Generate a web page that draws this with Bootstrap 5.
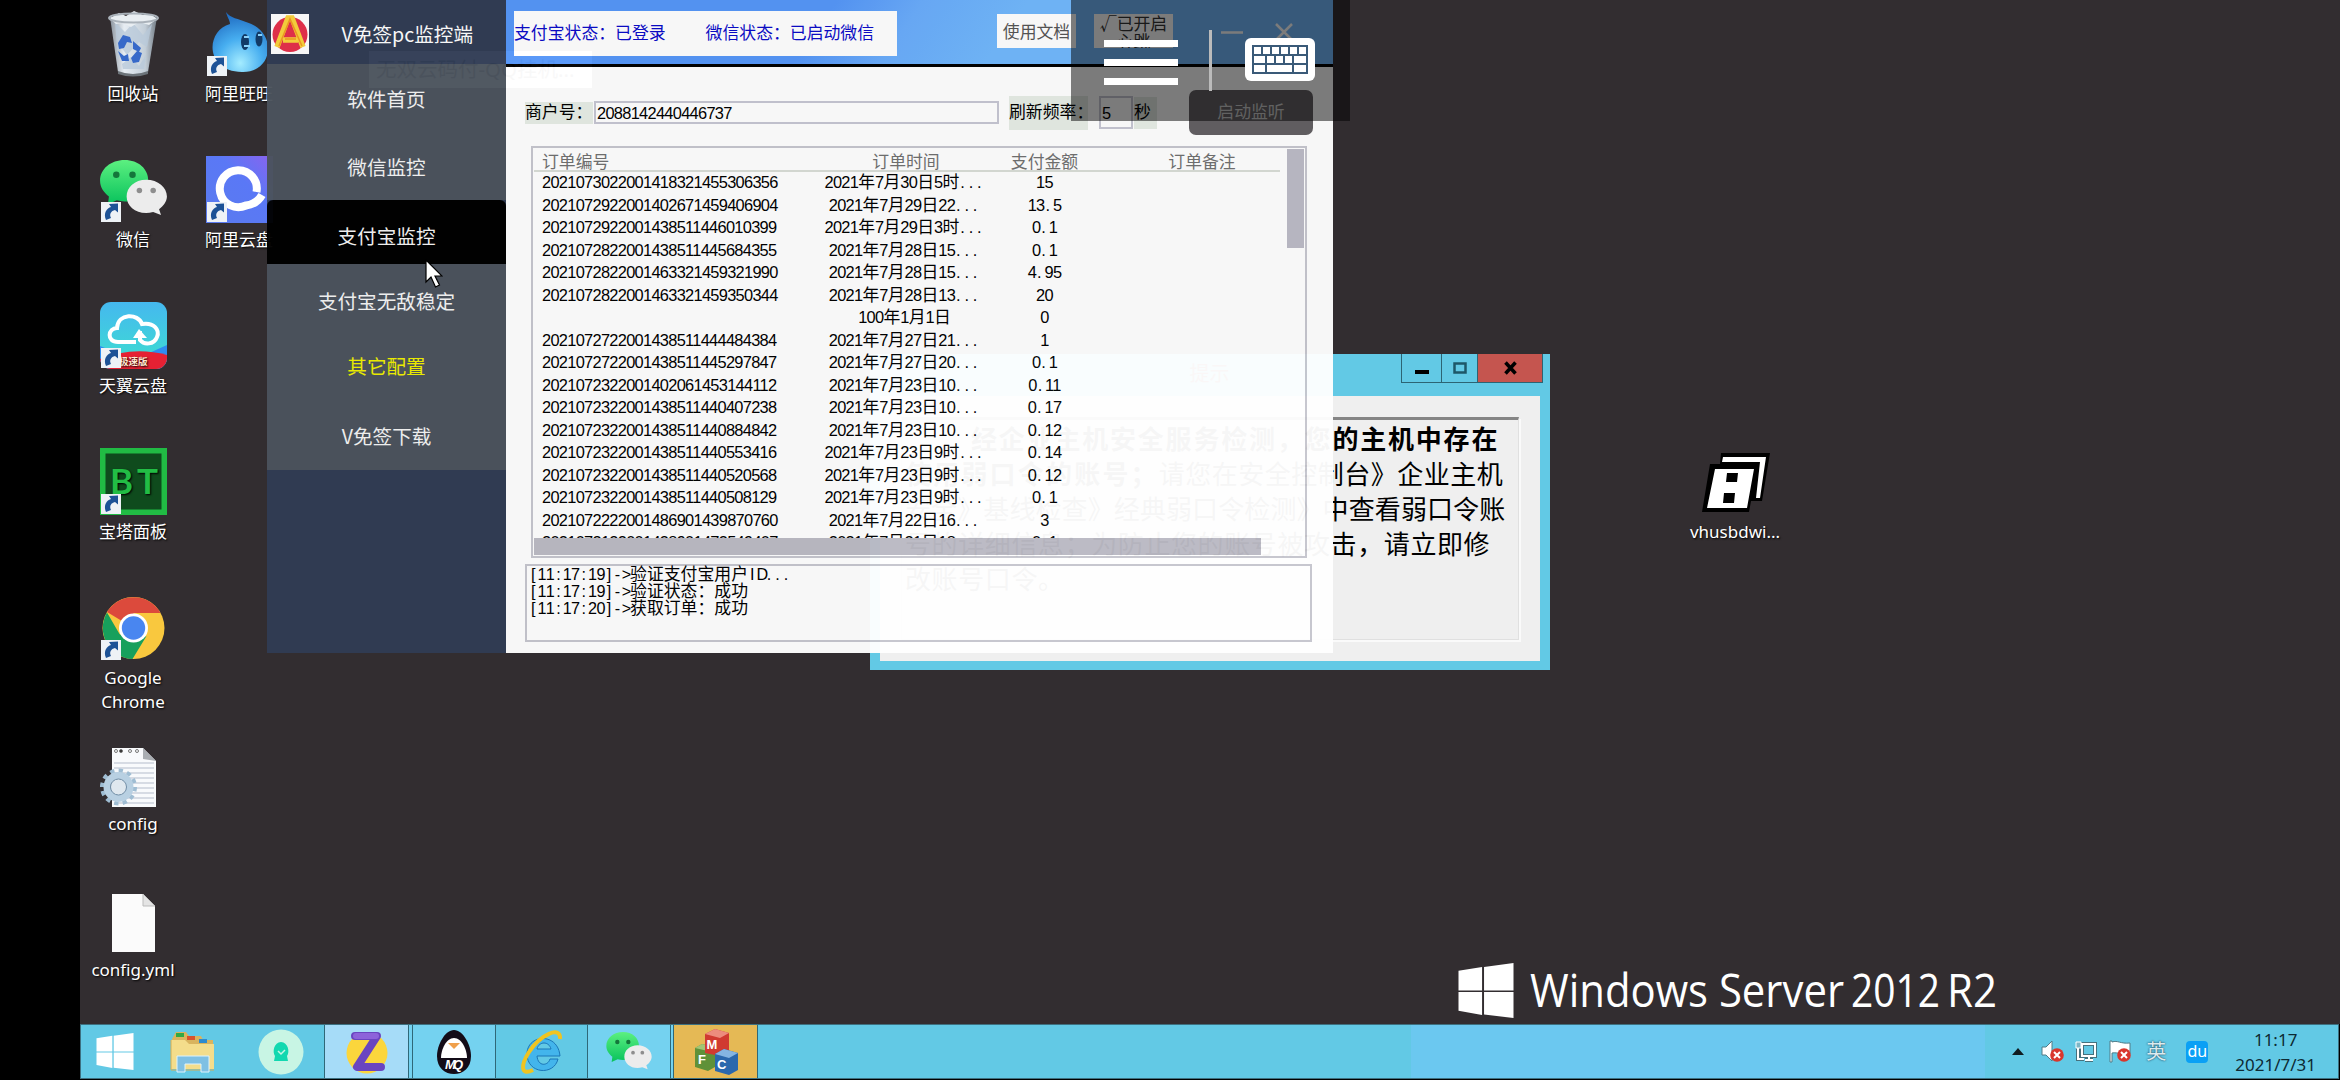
<!DOCTYPE html>
<html lang="zh-CN">
<head>
<meta charset="utf-8">
<title>Windows Server 2012 R2</title>
<link href="https://cdn.jsdelivr.net/npm/bootstrap@5.3.0/dist/css/bootstrap.min.css" rel="stylesheet">
<style>
body{width:2340px;height:1080px;overflow:hidden;background:#000;font:17px/24px "Noto Sans","Noto Sans CJK SC",sans-serif;color:#000}
.edge{width:80px;flex:none}
.desk{background:#322d30;width:2260px;height:1024px}
.icons{position:absolute;left:83px;top:10px;width:100px}
.icons.second{left:189px}
.icons.far{left:1685px;top:448px}
.ico{height:146px;color:#fff;text-align:center;text-shadow:1px 1px 2px #000;white-space:nowrap}
.ico svg{display:block;width:67px;height:67px;margin:0 auto 5px;overflow:visible}
.brand{position:absolute;left:1457px;top:958px}
.tip{position:absolute;left:369px;top:51px;width:223px;height:37px;background:#fff;color:#444;font-size:20.5px;line-height:37px;padding-left:7px;white-space:nowrap}
/* alert dialog */
.dlg{position:absolute;left:870px;top:354px;width:680px;height:316px;background:#62c9e5;padding:0 10px 9px}
.dlg-head{height:42px}
.dlg-title{flex:1;text-align:center;padding-left:138px;font-size:20px;line-height:40px;color:#7a2020}
.dlg-btns{height:29px;border:1px solid #2c6474;border-top:0;margin-right:-3px}
.dlg-btns span{display:flex;align-items:center;justify-content:center;border-right:1px solid #2c6474}
.dlg-btns span:last-child{border:0}
.dlg-body{background:#efefef;height:265px;padding:21px}
.msg{height:223px;border:1px solid #e0e0e0;border-top:3px solid #858585;box-shadow:2px 2px 0 #fafafa;font:26px/35px "Noto Sans CJK SC",sans-serif;padding:0 3px;white-space:nowrap}
/* main window */
.win{position:absolute;left:267px;top:0;width:1066px;height:653px;opacity:.965;background:#fff}
.side{width:239px;background:#303c54;flex:none;color:#fff;font:19.6px/26px "Noto Sans CJK SC",sans-serif;text-align:center}
.side-top{height:64px;padding:3px 33px 0 4px}
.side a{display:flex;align-items:center;justify-content:center;background:#4b535d;color:#f4f4f4;text-decoration:none}
.side a.on{background:#000;border-radius:6px 6px 0 0;height:64px;padding-top:7px}
.bar{height:67px;border-bottom:3px solid #000;background:linear-gradient(125deg,#5596f8 0 38%,#69acfb 48%,#71b7fc 60%);padding-left:8px}
.song{font-family:"Liberation Sans","Noto Sans CJK SC",sans-serif;font-size:16.85px;line-height:22px;white-space:nowrap}
.status{width:383px;height:45px;margin-top:11px;background:#fff;color:#0a0ac8;line-height:46px}
.mini{width:79px;height:34px;margin-top:14px;background:#fff;color:#555;text-align:center;overflow:hidden;line-height:34px;font-family:"Noto Sans CJK SC",sans-serif}
.mini.two{line-height:18px;white-space:normal;color:#333}
.panel{padding:23px 0 0 19px;width:827px}
.frm{height:45px}
.tag{background:#e6ece5}
.field{border:2px solid #c6c6d2;background:#fff;padding-left:1px}
.go{width:124px;height:45px;background:#625f62;color:#c8c8c8;border-radius:7px;text-align:center;line-height:46px}
.orders{margin:11px 0 0 6px;width:776px;height:412px;border:2px solid #c6c6ce;padding:1px}
.clipbox{height:389px;overflow:hidden;width:746px}
.grid-row{display:grid;grid-template-columns:289px 163px 117px 177px;text-align:center;height:22.5px;line-height:22.5px}
.grid-row>:first-child{text-align:left;padding-left:8px}
.grid-row>:last-child{padding-left:21px}
.grid-row.hd{height:23px;line-height:23px;border-bottom:2px solid #d8ddd6;color:#707070;font-family:"Noto Sans CJK SC",sans-serif}
#rows{margin-top:-.7px}
.n{font-size:16.4px;letter-spacing:-.7px}
.dt{letter-spacing:3.83px;padding-left:1px;margin-right:-1px}
.vs{width:17px;height:99px;background:#bbbac6;margin-left:7px}
.hs{width:727px;height:17px;background:#bbbac4}
.log{margin:6px 0 0 0;width:787px;height:78px;border:2px solid #c6c6ce;padding:0 2px;line-height:17px}
.log b{font-weight:400;display:inline-block;width:8.43px;text-align:center;font-size:16.2px}
.veil{position:absolute;left:1071px;top:0;width:279px;height:121px;background:rgba(0,0,0,.5)}
.cursor{position:absolute;left:425px;top:259px}
/* taskbar */
.tasks{height:55px;width:2259px;margin-left:80px;border:1px solid #3d7080;background:linear-gradient(90deg,#62c9e5 1330px,#6bc8f0 1330px 1904px,#62c9e5 1904px)}
.tasks>div{height:53px;display:flex;align-items:center;justify-content:center}
.run{background:#74d2f0;border:1px solid #2f6878;border-width:0 1px}
.tray{color:#0d2a33}
</style>
<script src="https://cdn.jsdelivr.net/npm/bootstrap@5.3.0/dist/js/bootstrap.bundle.min.js"></script>
</head>
<body>
<svg width="0" height="0" class="position-absolute">
<defs>
<symbol id="lnk" viewBox="0 0 20 20"><rect width="20" height="20" fill="#eef2f6"/><path d="M5 18C2 11 6 6 10 5L8 2l9-.5v9L14 8c-4 1-6 4-4 8z" fill="#1d5296"/></symbol>
<symbol id="wx" viewBox="0 0 68 60"><linearGradient id="g1" x2="0" y2="1"><stop stop-color="#5cf080"/><stop offset="1" stop-color="#08c25c"/></linearGradient><path d="M25 0C11 0 0 9 0 21c0 7 4 12 9 16l-1 8 9-4c14 4 32-3 32-20C49 9 39 0 25 0z" fill="url(#g1)"/><circle cx="16.500" cy="15" r="3.300" fill="#14773b"/><circle cx="33" cy="15" r="3.300" fill="#14773b"/><path d="M47 20c-12 0-20 8-20 17 0 11 12 20 27 16l8 3-2-6c4-3 8-8 8-13 0-9-9-17-21-17z" fill="#ececec"/><circle cx="40" cy="31" r="2.800" fill="#8e8e8e"/><circle cx="54" cy="31" r="2.800" fill="#8e8e8e"/></symbol>
<symbol id="flag" viewBox="0 0 56 56"><path d="M0 8 24 4v24H0zM26 4 56 0v28H26zM0 29.500h24V53L0 48.500zM26 29.500h30V56l-30-3.500z" fill="#fff"/></symbol>
<symbol id="err" viewBox="0 0 14 14"><circle cx="7" cy="7" r="6.800" fill="#d9362c"/><path d="m4 4 6 6m0-6-6 6" stroke="#fff" stroke-width="2"/></symbol>
</defs>
</svg>

<div class="d-flex">
 <div class="edge"></div>
 <main class="desk"></main>
</div>

<div class="icons d-flex flex-column">
 <div class="ico"><svg viewBox="0 0 67 67"><linearGradient id="bn"><stop stop-color="#8b949e"/><stop offset=".3" stop-color="#e7edf3"/><stop offset=".75" stop-color="#c3ced8"/><stop offset="1" stop-color="#737c85"/></linearGradient><path d="M10 7 18 62q15 6 30 0L57 7z" fill="url(#bn)"/><path d="m15 12 10 10 8-9 10 12 9-11-5 23-8-5-12 13-6-8-3 13zm7 42 9-7 8 9 7-11-2 14H23z" fill="#b9c9da" opacity=".8"/><path d="M10 8 19 3l7 3 8-5 9 4 8-1 6 5-8 6-10-3-8 5-9-4-6 1z" fill="#e9eef2"/><ellipse cx="33.500" cy="8" rx="24.500" ry="4.500" fill="none" stroke="#aab2ba" stroke-width="2"/><path d="m18 33 5-8 7 2 2 6-5-1-3 6-5 1zm15-2 8 7-2 4-6-3zM18 41l6 5 4-2 1 7h-7zM31 48l6-7 5 2-3 9-6 1z" fill="#3769c9"/><path d="M18 61q15 6 30 0v3q-15 5-30 0z" fill="#6c7379"/></svg>回收站</div>
 <div class="ico"><svg viewBox="0 0 67 67"><use href="#wx" x="0" y="4" width="67" height="59"/><use href="#lnk" x="1" y="46" width="20" height="20"/></svg>微信</div>
 <div class="ico"><svg viewBox="0 0 67 67"><linearGradient id="ty" x2="0" y2="1"><stop stop-color="#45b8ef"/><stop offset="1" stop-color="#3de0cf"/></linearGradient><clipPath id="tyc"><rect width="67" height="67" rx="11"/></clipPath><g clip-path="url(#tyc)"><rect width="67" height="67" fill="url(#ty)"/><path d="m0 44 20 8h27l20-9v24H0z" fill="#2e8df0"/><path d="M0 57q33-13 67-4v14H0z" fill="#e62133"/></g><path d="M36 40H18C6 40 8 26 17 26c1-15 21-15 25-4 12-2 18 6 15 13-3 8-13 8-17 3V29" fill="none" stroke="#fff" stroke-width="4"/><path d="m33 36 6-9 8 9z" fill="#fff"/><text x="19" y="63" font-size="9.500" font-weight="700" fill="#ffe9d0" font-family="Noto Sans CJK SC">极速版</text><use href="#lnk" x="1" y="46" width="20" height="20"/></svg>天翼云盘</div>
 <div class="ico"><svg viewBox="0 0 67 67"><rect width="67" height="67" fill="#21bb44"/><rect x="5.500" y="5.500" width="56" height="56" fill="#0f4b1d"/><text x="10" y="46" font-family="Lato" font-size="35" font-weight="700" fill="#22bd45" textLength="48">BT</text><use href="#lnk" x="1" y="46" width="20" height="20"/></svg>宝塔面板</div>
 <div class="ico"><svg viewBox="0 0 67 67"><g transform="translate(2.500 3)"><circle cx="31" cy="31" r="31" fill="#f9c83e"/><path d="M31 31 4.500 15A31 31 0 0 1 58 16H31z" fill="#dc4a3c"/><path d="M4.500 15.500A31 31 0 0 0 30 62L44 39 31 45 17 37z" fill="#17a05c"/><circle cx="31" cy="31" r="14.500" fill="#fff"/><circle cx="31" cy="31" r="11.700" fill="#4986f0"/></g><use href="#lnk" x="1" y="46" width="20" height="20"/></svg>Google<br>Chrome</div>
 <div class="ico"><svg viewBox="0 0 67 67"><path d="M12 8h31l13 13v46H12z" fill="#f8fafc"/><path d="M43 8v11l13 2z" fill="#a9adb2"/><path d="M14 23h40M14 28h40M14 33h40M14 38h40M14 43h40M14 48h40M14 53h40M14 58h40M14 63h40" stroke="#b4bccb"/><g fill="none" stroke="#777"><circle cx="16" cy="11" r="1.500"/><circle cx="21" cy="11" r="1.500" fill="#222"/><circle cx="30" cy="11" r="1.500"/><circle cx="37" cy="11" r="1.500"/></g><circle cx="18.500" cy="47" r="16.500" fill="none" stroke="#9fbdd3" stroke-width="4" stroke-dasharray="4.300 4.300"/><circle cx="18.500" cy="47" r="11.500" fill="none" stroke="#b8d0e2" stroke-width="7"/><circle cx="18.500" cy="47" r="8" fill="#dfe8ef" stroke="#6f8da6"/></svg>config</div>
 <div class="ico"><svg viewBox="0 0 67 67"><path d="M12 8h31l12 12v46H12z" fill="#fbfbfb"/><path d="M43 8v12h12z" fill="#e4e4e4" stroke="#bbb"/></svg>config.yml</div>
</div>
<div class="icons second d-flex flex-column">
 <div class="ico"><svg viewBox="0 0 67 67"><radialGradient id="ww" cx=".5" cy=".85" r=".9"><stop stop-color="#a4ecff"/><stop offset=".45" stop-color="#47aef0"/><stop offset="1" stop-color="#1a62bb"/></radialGradient><path d="M20 2c4 6 13 7 20 10 32 9 28 51-4 50C-1 62-1 21 24 14c0-4-3-7-4-12z" fill="url(#ww)"/><ellipse cx="39" cy="32" rx="4" ry="8" fill="#123a66"/><ellipse cx="53" cy="29" rx="3.500" ry="7.500" fill="#123a66"/><path d="M38 27h5M52 25h4M38 36h6" stroke="#8ad1f8" stroke-width="2"/><use href="#lnk" x="1" y="46" width="20" height="20"/></svg>阿里旺旺</div>
 <div class="ico"><svg viewBox="0 0 67 67"><linearGradient id="yp" x1="1" x2="0" y2="1"><stop stop-color="#8a63ef"/><stop offset=".4" stop-color="#5a78f6"/><stop offset="1" stop-color="#5a7bee"/></linearGradient><rect width="67" height="67" fill="url(#yp)"/><path d="M50.500 36A18.500 18.500 0 1 0 40 49.500Q51 48 56 39" fill="none" stroke="#fff" stroke-width="8"/><use href="#lnk" x="1" y="46" width="20" height="20"/></svg>阿里云盘</div>
</div>
<div class="icons far"><div class="ico"><svg viewBox="0 0 67 67"><path d="M19 5h49l-8 48h-11L47 64H0L8 16h10z" fill="#000"/><path d="M21 9h43l-6 41h-4l4-36H20zM13 21h39l-7 39H5z" fill="#fff"/><path d="M25 25h11l-1 9H24zM22 45h11l-1 10H21z" fill="#000"/></svg>vhusbdwi...</div></div>

<svg class="brand" width="545" height="66" viewBox="0 0 545 66"><use href="#flag" x="1" y="5" width="56" height="55"/><g fill="#fff" font-family="Open Sans, Noto Sans" font-size="46"><text x="73" y="49" textLength="314" lengthAdjust="spacingAndGlyphs">Windows Server</text><text x="394" y="49" textLength="89" lengthAdjust="spacingAndGlyphs">2012</text><text x="490" y="49" textLength="50" lengthAdjust="spacingAndGlyphs">R2</text></g></svg>

<div class="tip">无双云码付-QQ挂机...</div>

<section class="dlg">
 <div class="dlg-head d-flex align-items-start"><div class="dlg-title">提示</div>
  <div class="dlg-btns d-flex"><span style="width:40px"><svg width="14" height="14"><path d="M0 9h14v4H0z"/></svg></span><span style="width:36px"><svg width="14" height="14"><path d="M1.500 2.500h11v9h-11z" fill="none" stroke="#1d5768" stroke-width="2.500"/></svg></span><span style="width:64px;background:#c5554f"><svg width="13" height="14"><path d="M1.500 1.500l10 11m0-11-10 11" stroke="#000" stroke-width="3.500"/></svg></span></div>
 </div>
 <div class="dlg-body"><div class="msg">
  <div class="fw-bold" style="letter-spacing:1.8px;padding-left:66px">经企业主机安全服务检测，您的主机中存在</div>
  <div style="letter-spacing:.5px"><b style="letter-spacing:2.2px">使用弱口令的账号；</b>请您在安全控制台》企业主机</div>
  <div style="letter-spacing:.1px">安全》基线检查》经典弱口令检测》中查看弱口令账</div>
  <div style="letter-spacing:.6px">号的详细信息；为防止您的账号被攻击，请立即修</div>
  <div style="letter-spacing:.6px">改账号口令。</div>
 </div></div>
</section>

<section class="win d-flex">
 <nav class="side">
  <div class="side-top d-flex align-items-center justify-content-between"><svg width="38" height="40" viewBox="0 0 38 40"><rect width="38" height="40" fill="#fff"/><circle cx="19" cy="20.500" r="17.500" fill="#e5304a"/><path d="M6 33 17 4h4l11 29M12 26h15" fill="none" stroke="#f9d23c" stroke-width="5.500"/><path d="m8 32 11-27 12 27M14 25h11" fill="none" stroke="#f29a22" stroke-width="1.500"/></svg><span>V免签pc监控端</span></div>
  <a href="#" style="height:71px;padding-bottom:1px">软件首页</a>
  <a href="#" style="height:65px;padding-bottom:1px">微信监控</a>
  <a href="#" class="on">支付宝监控</a>
  <a href="#" style="height:74px">支付宝无敌稳定</a>
  <a href="#" style="height:55px;color:#f0f000">其它配置</a>
  <a href="#" style="height:77px;padding-top:8px">V免签下载</a>
 </nav>
 <div class="panelwrap">
  <header class="bar d-flex">
   <div class="status song"><span>支付宝状态：已登录</span><span class="ms-4 ps-3">微信状态：已启动微信</span></div>
   <div class="mini song" style="margin-left:100px">使用文档</div>
   <div class="mini two song" style="margin-left:18px">√已开启<br>心跳</div>
   <svg width="80" height="20" viewBox="0 0 80 20" style="margin:22px 0 0 46px"><path d="M2 10.500h22M57 2l16 16m0-16L57 18" stroke="#fff" stroke-width="2.500"/></svg>
  </header>
  <div class="panel">
   <div class="frm d-flex align-items-center song">
    <span class="tag" style="width:68px;height:22px">商户号：</span>
    <span class="field n" style="width:405px;height:23px;line-height:20px;margin-left:1px">2088142440446737</span>
    <span class="tag" style="width:79px;line-height:34px;margin-left:10px">刷新频率：</span>
    <span class="field n" style="width:34px;height:33px;line-height:31px;margin-left:11px">5</span>
    <span class="tag" style="width:23px;line-height:32px;margin-left:1px">秒</span>
    <span class="go song" style="margin-left:32px">启动监听</span>
   </div>
   <div class="orders song">
    <div class="d-flex" style="height:389px">
     <div class="clipbox">
      <div class="grid-row hd"><span>订单编号</span><span style="padding-left:3px">订单时间</span><span>支付金额</span><span>订单备注</span></div>
      <div id="rows"></div>
     </div>
     <div class="vs"></div>
    </div>
    <div class="hs"></div>
   </div>
   <div class="log song" id="log"></div>
  </div>
 </div>
</section>

<svg class="cursor" width="18" height="30" viewBox="0 0 18 30"><path d="M1 1v22l5-5 4.500 10 4-2-4.500-9h7z" fill="#fff" stroke="#000" stroke-width="1.200"/></svg>

<div class="veil">
 <svg width="279" height="121" viewBox="0 0 279 121"><path d="M33 40h74v7H33zM33 59h74v7H33zM33 78h74v7H33z" fill="#fff"/><path d="M139.500 30v61" stroke="#bbb" stroke-width="3"/><rect x="174" y="38" width="70" height="43" rx="6" fill="#fff"/><path d="M181 45h56v29h-56z" fill="#3a5a78"/><path d="M183 47h7v7h-7zM192 47h7v7h-7zM201 47h7v7h-7zM210 47h7v7h-7zM219 47h7v7h-7zM228 47h7v7h-7zM183 56h11v7h-11zM196 56h7v7h-7zM205 56h7v7h-7zM214 56h7v7h-7zM223 56h12v7h-12zM183 65h11v7h-11zM196 65h25v7h-25zM223 65h12v7h-12z" fill="#fff"/></svg>
</div>

<footer class="tasks d-flex">
 <div style="width:68px"><svg width="38" height="37"><use href="#flag" width="38" height="37"/></svg></div>
 <div style="width:88px"><svg width="46" height="42" viewBox="0 0 46 42"><path d="M2 8 6 1h10l3 4h12l2 4h10v5H2z" fill="#d9b45e"/><path d="M6 2h8v4H6z" fill="#30a844"/><path d="M17 5h8v4h-8z" fill="#d9532c"/><path d="M29 8h8v4h-8z" fill="#2d8bd0"/><path d="M1 9h14l4 4h25v25H1z" fill="#f4dd8b"/><path d="M1 9v30h43" fill="none" stroke="#d4ae55"/><path d="M7 41V25h32v16h-8v-8H15v8z" fill="#7fc0e3" stroke="#dff3fc"/></svg></div>
 <div style="width:87px"><svg width="46" height="46" viewBox="0 0 46 46"><circle cx="23" cy="23" r="22.500" fill="#c8f5e4"/><path d="M16 32l1-5c-3-4-1-14 6-14s9 10 6 14l1 5z" fill="#12d8b0"/><path d="m20 22 3 3 4-4" fill="none" stroke="#c8f5e4" stroke-width="1.500"/></svg></div>
 <div class="run" style="width:85px;background:#a6dcf8"><svg width="44" height="44" viewBox="0 0 44 44"><circle cx="22" cy="23" r="20.500" fill="#fbd63c"/><path d="M10 6h22L12 37h24" fill="none" stroke="#6a45c0" stroke-width="8" stroke-linecap="round" stroke-linejoin="round"/><path d="M11 6h20" stroke="#8d63da" stroke-width="6" stroke-linecap="round"/></svg></div>
 <div class="run" style="width:4px;border-left:0"></div>
 <div class="run" style="width:83px;border-left:0"><svg width="34" height="44" viewBox="0 0 34 44"><path d="M17 0c9 0 17 15 17 26 0 12-8 18-17 18S0 38 0 26C0 15 8 0 17 0z" fill="#130c18"/><path d="M17 8c8 0 13 12 13 20H4C4 20 9 8 17 8z" fill="#fff"/><path d="M11 13h12l-6 6z" fill="#f0a04c"/><text x="17" y="39" text-anchor="middle" textLength="18" font-family="Liberation Sans" font-weight="700" font-style="italic" font-size="13" fill="#fff">MQ</text></svg></div>
 <div style="width:91px"><svg width="46" height="46" viewBox="0 0 46 46"><path d="M39 30c-4 17-31 15-31-5C8 5 39 3 41 27H18c1 11 11 10 13 3z" fill="#43b5ec" stroke="#1b76b8"/><path d="M18 20c2-8 12-8 14 0z" fill="#62c9e5" stroke="#1b76b8"/><path d="M41 10c1-14-20-4-31 13C1 37 2 47 14 41" fill="none" stroke="#efc420" stroke-width="4"/></svg></div>
 <div class="run" style="width:84px"><svg width="46" height="40"><use href="#wx" width="46" height="40"/></svg></div>
 <div class="run" style="width:3px;border-left:0"></div>
 <div class="run" style="width:84px;background:#e5b955;border-left:0"><svg width="44" height="46" viewBox="0 0 44 46"><path d="m1 19 7-4 13 3v20l-7 4L1 38z" fill="#5f9138"/><path d="m1 19 7-4 13 3-7 4z" fill="#a2c574"/><path d="m11 5 10-5 14 4v18l-9 5-15-3z" fill="#d03a31"/><path d="m11 5 10-5 14 4-9 5z" fill="#ec8c7e"/><path d="m21 25 9-5 14 4v17l-9 5-14-4z" fill="#2b68ad"/><path d="m21 25 9-5 14 4-9 5z" fill="#85b5e2"/><g fill="#fff" font-family="Liberation Sans" font-weight="700" font-size="13"><text x="12.500" y="20">M</text><text x="4" y="35">F</text><text x="23" y="40">C</text></g></svg></div>
 <div class="tray ms-auto">
  <svg width="12" height="7" viewBox="0 0 12 7"><path d="M0 7 6 0l6 7z" fill="#101c20"/></svg>
  <svg width="24" height="24" viewBox="0 0 24 24" style="margin-left:17px"><path d="M1 7h4l6-6v20l-6-6H1z" fill="#fff" stroke="#507c88"/><use href="#err" x="9" y="8" width="14" height="14"/></svg>
  <svg width="24" height="24" viewBox="0 0 24 24" style="margin-left:9px"><path d="M8 4h13v12H8zM11 20h8M15 16v4M4 8v11h6" fill="none" stroke="#47717d" stroke-width="4"/><path d="M8 4h13v12H8zM11 20h8M15 16v4M4 8v11h6" fill="none" stroke="#fff" stroke-width="2"/><path d="M2 2h5v6H2z" fill="#7db6c6" stroke="#fff"/></svg>
  <svg width="24" height="24" viewBox="0 0 24 24" style="margin-left:10px"><path d="M2 22V1h2v1c6-2 8 2 18 1v11c-8 1-12-2-18-1v9z" fill="#fff" stroke="#507c88"/><use href="#err" x="9" y="8" width="14" height="14"/></svg>
  <span style="margin-left:14px;color:#dcecf0;font-size:20px;text-shadow:0 0 2px #123;line-height:22px">英</span>
  <span class="text-white text-center rounded-1" style="margin-left:20px;width:22px;height:22px;background:#0aa0f5;line-height:21px;font-size:16px">du</span>
  <div class="text-center" style="margin:0 22px 0 27px;line-height:25px">11:17<br>2021/7/31</div>
 </div>
</footer>

<script>
// Half-width figures and full-width characters are sized separately, as in a bitmap Song face.
const cells = s => s.replace(/[0-9]+|\.+/g, m => `<span class="n${m[0] === '.' ? ' dt' : ''}">${m}</span>`);
const orders = [
 ['2021073022001418321455306356','2021年7月30日5时...','15'],
 ['2021072922001402671459406904','2021年7月29日22...','13.5'],
 ['2021072922001438511446010399','2021年7月29日3时...','0.1'],
 ['2021072822001438511445684355','2021年7月28日15...','0.1'],
 ['2021072822001463321459321990','2021年7月28日15...','4.95'],
 ['2021072822001463321459350344','2021年7月28日13...','20'],
 ['','100年1月1日','0'],
 ['2021072722001438511444484384','2021年7月27日21...','1'],
 ['2021072722001438511445297847','2021年7月27日20...','0.1'],
 ['2021072322001402061453144112','2021年7月23日10...','0.11'],
 ['2021072322001438511440407238','2021年7月23日10...','0.17'],
 ['2021072322001438511440884842','2021年7月23日10...','0.12'],
 ['2021072322001438511440553416','2021年7月23日9时...','0.14'],
 ['2021072322001438511440520568','2021年7月23日9时...','0.12'],
 ['2021072322001438511440508129','2021年7月23日9时...','0.1'],
 ['2021072222001486901439870760','2021年7月22日16...','3'],
 ['2021072122001438901473549407','2021年7月21日18...','0.1']];
document.getElementById('rows').innerHTML = orders.map(r =>
 `<div class="grid-row">${r.map(c => `<span>${cells(c)}</span>`).join('')}<span></span></div>`).join('');
document.getElementById('log').innerHTML = ['[11:17:19]->验证支付宝用户ID...','[11:17:19]->验证状态：成功','[11:17:20]->获取订单：成功']
 .map(l => `<div>${l.replace(/[\x21-\x7e]/g, c => `<b>${c === '>' ? '&gt;' : c}</b>`)}</div>`).join('');
</script>
</body>
</html>
